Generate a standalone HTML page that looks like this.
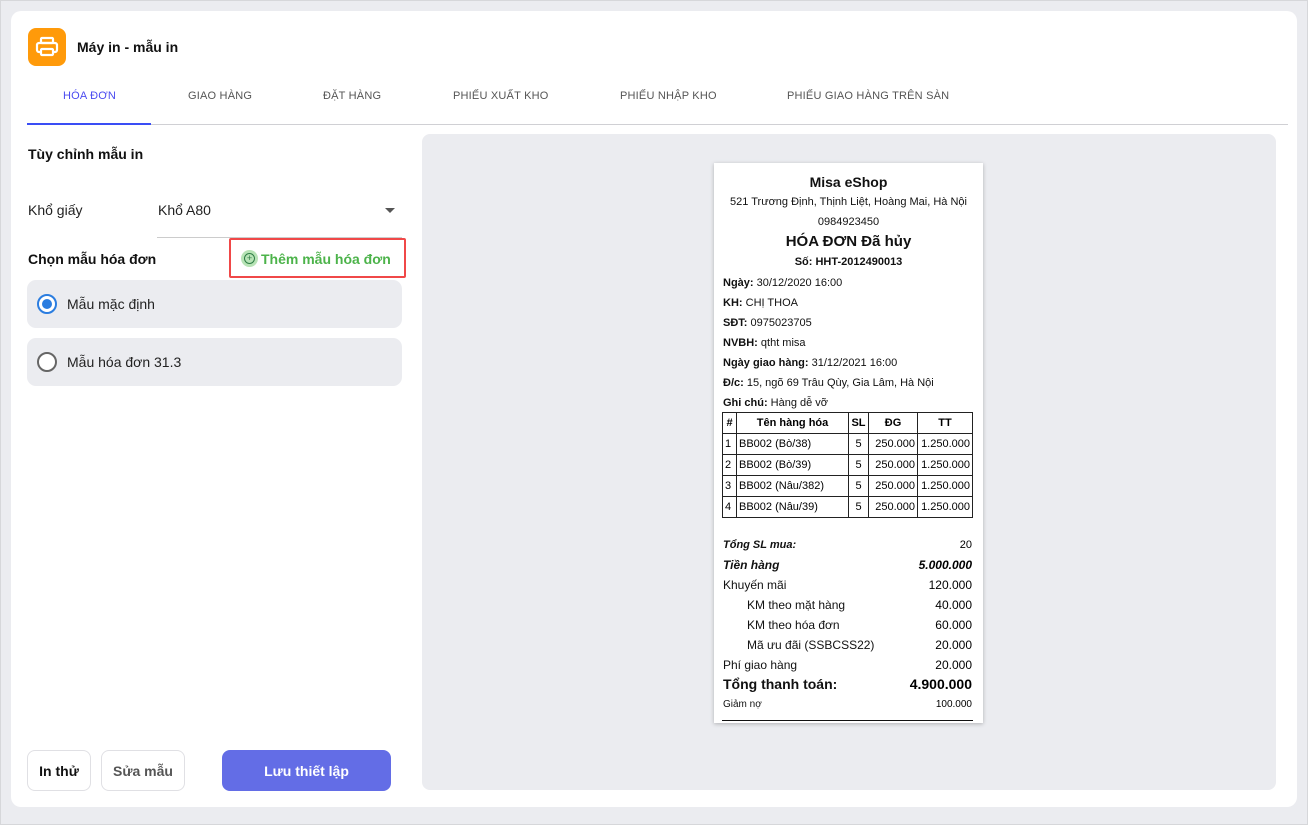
<!DOCTYPE html>
<html><head><meta charset="utf-8"><style>
*{box-sizing:border-box;margin:0;padding:0}
body{width:1308px;height:825px;background:#ebecf0;font-family:"Liberation Sans",Arial,sans-serif;position:relative;overflow:hidden}
.a{position:absolute;white-space:nowrap}
.card{position:absolute;left:11px;top:11px;width:1286px;height:796px;background:#fff;border-radius:10px}
.tab{position:absolute;top:90px;font-size:11px;color:#555;letter-spacing:.2px}
.opt{position:absolute;left:27px;width:375px;height:48px;background:#ebecf0;border-radius:9px}
.rad{position:absolute;left:10px;top:14px;width:20px;height:20px;border-radius:50%;border:2px solid #666;background:#fff}
.btn{position:absolute;top:750px;height:41px;border:1px solid #e0e0e4;border-radius:8px;font-size:14px;font-weight:bold;display:flex;align-items:center;justify-content:center;background:#fff}
.r{position:absolute;font-size:11px;color:#111;white-space:nowrap}
.rr{position:absolute;right:11px;font-size:11px;white-space:nowrap;text-align:right}
table{position:absolute;left:8px;top:249px;border-collapse:collapse;font-size:11px}
td{border:1px solid #222;height:21px;padding:0 2px}
</style></head><body>
<div class="a" style="left:0;top:0;width:1308px;height:825px;border:1px solid #d6d7da"></div>
<div class="card"></div>
<div class="a" style="left:28px;top:28px;width:38px;height:38px;background:#ff9a0a;border-radius:8px">
<svg width="38" height="38" viewBox="0 0 38 38" fill="none" stroke="#fff" stroke-width="2.2"><rect x="13" y="10" width="12" height="5" rx="1"/><rect x="9" y="15" width="20" height="9" rx="2"/><rect x="13" y="21" width="12" height="6" rx="1" fill="#ff9a0a"/></svg></div>
<div class="a" style="left:77px;top:39px;font-size:14px;font-weight:bold;color:#111">Máy in - mẫu in</div>
<div class="tab" style="left:63px;color:#4b4bf0">HÓA ĐƠN</div>
<div class="tab" style="left:188px">GIAO HÀNG</div>
<div class="tab" style="left:323px">ĐẶT HÀNG</div>
<div class="tab" style="left:453px">PHIẾU XUẤT KHO</div>
<div class="tab" style="left:620px">PHIẾU NHẬP KHO</div>
<div class="tab" style="left:787px">PHIẾU GIAO HÀNG TRÊN SÀN</div>
<div class="a" style="left:27px;top:124px;width:1261px;height:1px;background:#d0d0d4"></div>
<div class="a" style="left:27px;top:123px;width:124px;height:2px;background:#3a4ef5"></div>
<div class="a" style="left:28px;top:146px;font-size:14px;font-weight:bold;color:#111">Tùy chỉnh mẫu in</div>
<div class="a" style="left:28px;top:202px;font-size:14px;color:#222">Khổ giấy</div>
<div class="a" style="left:158px;top:202px;font-size:14px;color:#222">Khổ A80</div>
<div class="a" style="left:385px;top:208px;width:0;height:0;border-left:5px solid transparent;border-right:5px solid transparent;border-top:5px solid #555"></div>
<div class="a" style="left:157px;top:237px;width:245px;height:1px;background:#ccc"></div>
<div class="a" style="left:28px;top:251px;font-size:14px;font-weight:bold;color:#111">Chọn mẫu hóa đơn</div>
<div class="a" style="left:229px;top:238px;width:177px;height:40px;border:2px solid #f04848;border-radius:2px"></div>
<div class="a" style="left:241px;top:250px;width:17px;height:17px;border-radius:50%;background:#b7e3b5"></div>
<div class="a" style="left:244px;top:253px;width:11px;height:11px;border-radius:50%;border:1.3px solid #2e7d45;font-size:9px;line-height:8px;text-align:center;color:#2e7d45">+</div>
<div class="a" style="left:261px;top:251px;font-size:14px;font-weight:bold;color:#4cb34a">Thêm mẫu hóa đơn</div>
<div class="opt" style="top:280px"><div class="rad" style="border-color:#2b7de0"><div style="position:absolute;left:3px;top:3px;width:10px;height:10px;border-radius:50%;background:#2b7de0"></div></div><div class="a" style="left:40px;top:16px;font-size:14px;color:#222">Mẫu mặc định</div></div>
<div class="opt" style="top:338px"><div class="rad"></div><div class="a" style="left:40px;top:16px;font-size:14px;color:#222">Mẫu hóa đơn 31.3</div></div>
<div class="btn" style="left:27px;width:64px;color:#111">In thử</div>
<div class="btn" style="left:101px;width:84px;color:#555">Sửa mẫu</div>
<div class="btn" style="left:222px;width:169px;background:#636de6;border-color:#636de6;color:#fff">Lưu thiết lập</div>
<div class="a" style="left:422px;top:134px;width:854px;height:656px;background:#ebecf0;border-radius:8px"></div>
<div class="a" style="left:714px;top:163px;width:269px;height:560px;background:#fff;box-shadow:0 1px 4px rgba(0,0,0,.25)">
<div class="r" style="left:0;width:269px;text-align:center;top:11px;font-size:14px;font-weight:bold">Misa eShop</div>
<div class="r" style="left:0;width:269px;text-align:center;top:33px">521 Trương Định, Thịnh Liệt, Hoàng Mai, Hà Nội</div>
<div class="r" style="left:0;width:269px;text-align:center;top:53px">0984923450</div>
<div class="r" style="left:0;width:269px;text-align:center;top:70px;font-size:15px;font-weight:bold">HÓA ĐƠN Đã hủy</div>
<div class="r" style="left:0;width:269px;text-align:center;top:93px;font-weight:bold">Số: HHT-2012490013</div>
<div class="r" style="left:9px;top:114px"><b>Ngày:</b> 30/12/2020 16:00</div>
<div class="r" style="left:9px;top:134px"><b>KH:</b> CHỊ THOA</div>
<div class="r" style="left:9px;top:154px"><b>SĐT:</b> 0975023705</div>
<div class="r" style="left:9px;top:174px"><b>NVBH:</b> qtht misa</div>
<div class="r" style="left:9px;top:194px"><b>Ngày giao hàng:</b> 31/12/2021 16:00</div>
<div class="r" style="left:9px;top:214px"><b>Đ/c:</b> 15, ngõ 69 Trâu Qùy, Gia Lâm, Hà Nội</div>
<div class="r" style="left:9px;top:234px"><b>Ghi chú:</b> Hàng dễ vỡ</div>
<table>
<tr style="font-weight:bold;text-align:center"><td style="width:14px">#</td><td style="width:112px">Tên hàng hóa</td><td style="width:20px">SL</td><td style="width:49px">ĐG</td><td style="width:55px">TT</td></tr>
<tr><td>1</td><td>BB002 (Bò/38)</td><td style="text-align:center">5</td><td style="text-align:right">250.000</td><td style="text-align:right">1.250.000</td></tr>
<tr><td>2</td><td>BB002 (Bò/39)</td><td style="text-align:center">5</td><td style="text-align:right">250.000</td><td style="text-align:right">1.250.000</td></tr>
<tr><td>3</td><td>BB002 (Nâu/382)</td><td style="text-align:center">5</td><td style="text-align:right">250.000</td><td style="text-align:right">1.250.000</td></tr>
<tr><td>4</td><td>BB002 (Nâu/39)</td><td style="text-align:center">5</td><td style="text-align:right">250.000</td><td style="text-align:right">1.250.000</td></tr>
</table>
<div class="r" style="left:9px;top:376px;font-weight:bold;font-style:italic">Tổng SL mua:</div><div class="rr" style="top:376px">20</div>
<div class="r" style="left:9px;top:395px;font-size:12px;font-weight:bold;font-style:italic">Tiền hàng</div><div class="rr" style="top:395px;font-size:12px;font-weight:bold;font-style:italic">5.000.000</div>
<div class="r" style="left:9px;top:415px;font-size:12px">Khuyến mãi</div><div class="rr" style="top:415px;font-size:12px">120.000</div>
<div class="r" style="left:33px;top:435px;font-size:12px">KM theo mặt hàng</div><div class="rr" style="top:435px;font-size:12px">40.000</div>
<div class="r" style="left:33px;top:455px;font-size:12px">KM theo hóa đơn</div><div class="rr" style="top:455px;font-size:12px">60.000</div>
<div class="r" style="left:33px;top:475px;font-size:12px">Mã ưu đãi (SSBCSS22)</div><div class="rr" style="top:475px;font-size:12px">20.000</div>
<div class="r" style="left:9px;top:495px;font-size:12px">Phí giao hàng</div><div class="rr" style="top:495px;font-size:12px">20.000</div>
<div class="r" style="left:9px;top:513px;font-size:14px;font-weight:bold">Tổng thanh toán:</div><div class="rr" style="top:513px;font-size:14px;font-weight:bold">4.900.000</div>
<div class="r" style="left:9px;top:536px;font-size:10px">Giảm nợ</div><div class="rr" style="top:536px;font-size:10px">100.000</div>
<div class="a" style="left:8px;top:557px;width:251px;height:1px;background:#111"></div>
</div>
</body></html>
